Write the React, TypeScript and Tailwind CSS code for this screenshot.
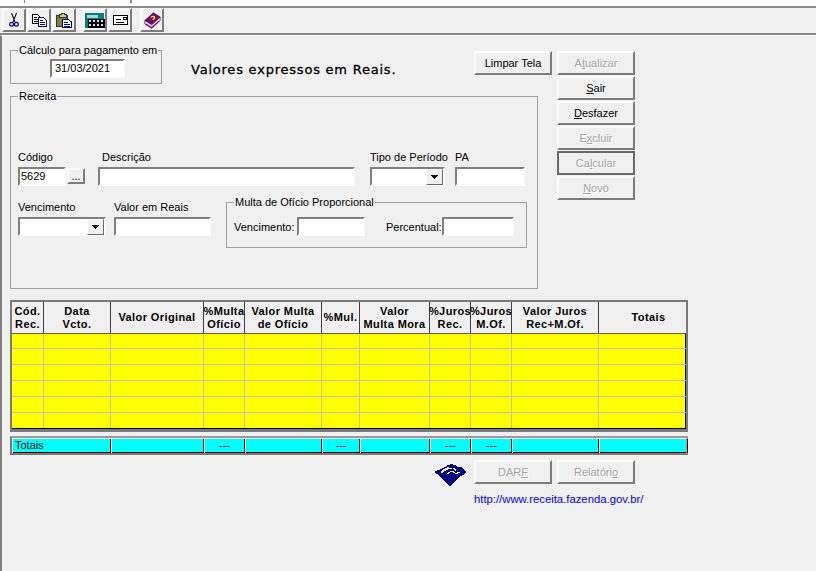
import React from "react";

const sunken = "border-2 border-t-[#808080] border-l-[#808080] border-b-[#fcfcfc] border-r-[#fcfcfc] bg-white";
const raised = "border-2 border-t-[#fbfbfb] border-l-[#fbfbfb] border-b-[#7c7c7c] border-r-[#7c7c7c] bg-[#f0f0f0]";
const defaultRaised = "border-2 border-[#696969] bg-[#f0f0f0]";
const gridCols = "grid grid-cols-[32px_67px_93px_41px_77px_38px_70px_41px_41px_87px_87px]";
const totalCols = "grid grid-cols-[99px_93px_41px_77px_38px_70px_41px_41px_87px_89px]";

const headers = [
  ["Cód.", "Rec."],
  ["Data", "Vcto."],
  ["Valor Original"],
  ["%Multa", "Ofício"],
  ["Valor Multa", "de Ofício"],
  ["%Mul."],
  ["Valor", "Multa Mora"],
  ["%Juros", "Rec."],
  ["%Juros", "M.Of."],
  ["Valor Juros", "Rec+M.Of."],
  ["Totais"],
];

const totals = ["Totais", "", "---", "", "---", "", "---", "---", "", ""];

function Btn({ children, disabled, strong, className = "" }: { children: React.ReactNode; disabled?: boolean; strong?: boolean; className?: string }) {
  return (
    <div
      className={`w-[78px] h-[24px] flex items-center justify-center text-[11px] ${strong ? defaultRaised : raised} ${
        disabled ? "text-[#a3a3a3] [text-shadow:1px_1px_0_#ffffff]" : "text-black"
      } ${className}`}
    >
      <span>{children}</span>
    </div>
  );
}

function Combo({ width }: { width: string }) {
  return (
    <div className={`h-[19px] flex justify-end items-start ${sunken} ${width}`}>
      <div className="w-[17px] h-[16px] flex items-center justify-center bg-[#f0f0f0] border border-t-[#fbfbfb] border-l-[#fbfbfb] border-b-[#6a6a6a] border-r-[#6a6a6a]">
        <svg width="7" height="4" viewBox="0 0 7 4" shapeRendering="crispEdges">
          <path d="M0 0H7V1H6V2H5V3H4V4H3V3H2V2H1V1H0Z" fill="#000" />
        </svg>
      </div>
    </div>
  );
}

function ToolBtn({ children }: { children: React.ReactNode }) {
  return <div className={`w-[24px] h-[24px] flex items-center justify-center ${raised}`}>{children}</div>;
}

function Scissors() {
  return (
    <svg width="10" height="14" viewBox="0 0 10 14" fill="none">
      <path d="M2.5 0L6 9M7.5 0L4 9" stroke="#111" strokeWidth="1.1" />
      <circle cx="2.6" cy="11.2" r="1.9" stroke="#000080" strokeWidth="1.2" />
      <circle cx="7.4" cy="11.2" r="1.9" stroke="#000080" strokeWidth="1.2" />
    </svg>
  );
}

function CopyIcon() {
  return (
    <svg width="15" height="13" viewBox="0 0 15 13" shapeRendering="crispEdges">
      <path d="M0.5 0.5H5.5L8.5 3.5V9.5H0.5Z" fill="#fff" stroke="#000" />
      <path d="M2 3H5M2 5H7M2 7H7" stroke="#000" />
      <path d="M6.5 3.5H11.5L14.5 6.5V12.5H6.5Z" fill="#fff" stroke="#000080" />
      <path d="M8 6H11M8 8H13M8 10H13" stroke="#000080" />
    </svg>
  );
}

function PasteIcon() {
  return (
    <svg width="16" height="15" viewBox="0 0 16 15" shapeRendering="crispEdges">
      <path d="M0.5 2.5H11.5V13.5H0.5Z" fill="#808040" stroke="#333" />
      <path d="M3 1.5H5V0.5H8V1.5H10V4H3Z" fill="#e8d050" stroke="#333" />
      <path d="M6.5 6.5H12L15.5 9V14.5H6.5Z" fill="#fff" stroke="#000080" />
      <path d="M8 9H12M8 11H14M8 13H14" stroke="#000080" />
    </svg>
  );
}

function CalcIcon() {
  return (
    <svg width="20" height="15" viewBox="0 0 20 15" shapeRendering="crispEdges">
      <path d="M0 0H19V15H0Z" fill="#008080" />
      <path d="M2 2H13V5H2Z" fill="#9adada" />
      <path d="M3 6H20V15H3Z" fill="#000" />
      <path d="M4 7H6V9H4ZM8 7H10V9H8ZM12 7H14V9H12ZM16 7H18V9H16ZM4 11H6V13H4ZM8 11H10V13H8ZM12 11H14V13H12ZM16 11H18V13H16Z" fill="#bfe8e8" />
    </svg>
  );
}

function CardIcon() {
  return (
    <svg width="15" height="10" viewBox="0 0 15 10" shapeRendering="crispEdges">
      <path d="M0.5 0.5H14.5V9.5H0.5Z" fill="#fff" stroke="#000" />
      <path d="M3 4H8M3 7H11M10 2H13V4H10Z" stroke="#000" fill="none" />
    </svg>
  );
}

function BookIcon() {
  return (
    <svg width="17" height="17" viewBox="0 0 20 20">
      <path d="M1 10L11 1L19 6L9 15Z" fill="#800080" stroke="#300030" strokeWidth="0.8" />
      <path d="M1 10V14L9 19L19 10V6L9 15Z" fill="#e8e8e8" stroke="#300030" strokeWidth="0.8" />
      <path d="M2 14L9 18.5L18 10.5" fill="none" stroke="#800080" strokeWidth="1.4" />
      <path d="M8.5 6.5C9.5 4.5 13 5 12.5 7C12 8 10.5 8 10.5 9.5" fill="none" stroke="#ffff00" strokeWidth="1.6" />
    </svg>
  );
}

function ReceitaLogo() {
  return (
    <svg width="33" height="23" viewBox="0 0 33 23" className="mt-[4px]" shapeRendering="crispEdges">
      <path d="M0 8L7 5L11 3L14 1L17 0L21 1L23 3L27 3L33 8L29 11L25 13L17 22H15L5 11L2 10Z" fill="#000080" />
      <path d="M7 9H9V8H10V7H12V6H14V5H18V4H15V3H13V4H11V5H9V6H8V7H7Z" fill="#f0f0f0" />
      <path d="M13 10H15V9H16V8H19V9H21V10H24V9H26V8H23V9H21V8H20V7H16V8H14V9H13Z" fill="#f0f0f0" />
      <path d="M19 4H21V5H22V7H21V6H20V5H19Z" fill="#f0f0f0" />
    </svg>
  );
}

export default function App() {
  return (
    <div className="w-[816px] h-[571px] overflow-hidden bg-[#f0f0f0] text-black text-[11px] leading-[14px] font-['Liberation_Sans',Arial,sans-serif]">
      {/* faixa do topo */}
      <div className="h-[6px] bg-white flex items-start">
        <div className="w-[1px] h-[3px] bg-[#d06060] ml-[24px]" />
        <div className="w-[2px] h-[3px] bg-[#8090a0] ml-[105px]" />
      </div>
      <div className="h-[2px] bg-[#8a8a8a]" />

      {/* barra de ferramentas */}
      <div className="h-[24px] flex items-start pl-[2px]">
        <ToolBtn><Scissors /></ToolBtn>
        <div className="w-px" />
        <ToolBtn><CopyIcon /></ToolBtn>
        <div className="w-px" />
        <ToolBtn><PasteIcon /></ToolBtn>
        <div className="w-[7px]" />
        <ToolBtn><CalcIcon /></ToolBtn>
        <div className="w-px" />
        <ToolBtn><CardIcon /></ToolBtn>
        <div className="w-[8px]" />
        <ToolBtn><BookIcon /></ToolBtn>
      </div>
      <div className="h-[2px] bg-[#8a8a8a] mt-[1px]" />

      <div className="border-l-2 border-l-[#808080] h-[536px] pl-[8px] pt-[8px] border-t border-t-white">
        <div className="flex items-start">
          <div className="w-[542px]">
            <div className="flex items-start h-[46px]">
              <fieldset className="w-[152px] h-[40px] border border-[#a0a0a0] pl-[7px]">
                <legend className="px-[1px] leading-[13px] whitespace-nowrap">Cálculo para pagamento em</legend>
                <div className={`w-[75px] h-[19px] ml-[32px] mt-[2px] pl-[3px] leading-[15px] ${sunken}`}>31/03/2021</div>
              </fieldset>
              <div className="ml-[29px] mt-[18px] text-[13px] leading-[16px] font-['DejaVu_Sans',sans-serif] tracking-[0.78px] [-webkit-text-stroke:0.3px_#000]">Valores expressos em Reais.</div>
              <Btn className="ml-auto mt-[7px]">Limpar Tela</Btn>
            </div>

            <fieldset className="w-[528px] h-[199px] border border-[#a0a0a0] pl-[7px]">
              <legend className="px-[1px] leading-[13px]">Receita</legend>
              <div className="flex items-start pt-[47px]">
                <div className="w-[80px]">
                  <div className="h-[14px]">Código</div>
                  <div className="flex items-start mt-[3px]">
                    <div className={`w-[48px] h-[19px] pl-[1px] leading-[15px] ${sunken}`}>5629</div>
                    <div className={`w-[18px] h-[16px] ml-px mt-px flex items-center justify-center leading-[10px] ${raised}`}>...</div>
                  </div>
                </div>
                <div className="w-[257px]">
                  <div className="h-[14px] pl-[4px]">Descrição</div>
                  <div className={`h-[19px] mt-[3px] ${sunken}`} />
                </div>
                <div className="ml-[15px] w-[75px]">
                  <div className="h-[14px] whitespace-nowrap">Tipo de Período</div>
                  <Combo width="w-[75px] mt-[3px]" />
                </div>
                <div className="ml-[10px] w-[70px]">
                  <div className="h-[14px]">PA</div>
                  <div className={`h-[19px] mt-[3px] ${sunken}`} />
                </div>
              </div>

              <div className="flex items-start mt-[10px]">
                <div className="w-[88px] pt-[4px]">
                  <div className="h-[14px]">Vencimento</div>
                  <Combo width="w-[88px] mt-[3px]" />
                </div>
                <div className="ml-[8px] w-[97px] pt-[4px]">
                  <div className="h-[14px]">Valor em Reais</div>
                  <div className={`h-[19px] mt-[3px] ${sunken}`} />
                </div>
                <fieldset className="ml-[15px] w-[301px] h-[52px] border border-[#a0a0a0] pl-[7px]">
                  <legend className="px-[1px] leading-[13px]">Multa de Ofício Proporcional</legend>
                  <div className="flex items-center mt-[8px]">
                    <span className="w-[63px] whitespace-nowrap">Vencimento:</span>
                    <div className={`w-[68px] h-[19px] ${sunken}`} />
                    <span className="ml-[21px] w-[56px] whitespace-nowrap">Percentual:</span>
                    <div className={`w-[72px] h-[19px] ${sunken}`} />
                  </div>
                </fieldset>
              </div>
            </fieldset>
          </div>

          <div className="ml-[5px] mt-[7px] flex flex-col gap-px">
            <Btn disabled>A<u>t</u>ualizar</Btn>
            <Btn><u>S</u>air</Btn>
            <Btn><u>D</u>esfazer</Btn>
            <Btn disabled>E<u>x</u>cluir</Btn>
            <Btn disabled strong>Ca<u>l</u>cular</Btn>
            <Btn disabled><u>N</u>ovo</Btn>
          </div>
        </div>

        {/* grade de valores */}
        <div className="mt-[11px] w-[678px] h-[132px] border-2 border-[#7a7a7a] border-b-[3px] bg-[#f0f0f0]">
          <div className={`${gridCols} h-[32px] border-b border-b-[#606060]`}>
            {headers.map((lines, i) => (
              <div
                key={i}
                className={`flex flex-col items-center justify-center font-bold text-[11px] leading-[13px] tracking-[0.4px] whitespace-nowrap ${
                  i === 10 ? "pl-[12px]" : "border-r border-r-[#404040]"
                }`}
              >
                {lines.map((l) => (
                  <span key={l}>{l}</span>
                ))}
              </div>
            ))}
          </div>
          {[0, 1, 2, 3, 4, 5].map((r) => (
            <div key={r} className={`${gridCols} ${r === 0 ? "h-[15px]" : "h-[16px]"} bg-[#ffff00] ${r === 5 ? "border-b border-b-black" : "border-b border-b-[#c0c0c0]"}`}>
              {headers.map((_, i) => (
                <div key={i} className={`border-r ${i === 10 ? "border-r-black" : "border-r-[#c0c0c0]"}`} />
              ))}
            </div>
          ))}
        </div>

        {/* totais */}
        <div className="mt-[4px] w-[678px] h-[19px] border-2 border-[#7a7a7a] border-t-[#9a9a9a] border-r-[#9a9a9a]">
          <div className={`${totalCols} h-[15px] bg-[#00ffff] border-t border-t-white border-b border-b-black`}>
            {totals.map((t, i) => (
              <div key={i} className={`h-[14px] border-r border-r-black border-l border-l-white leading-[12px] ${i === 0 ? "pl-[2px]" : "text-center"}`}>
                {t}
              </div>
            ))}
          </div>
        </div>

        {/* rodapé */}
        <div className="flex items-start mt-[5px] ml-[424px]">
          <ReceitaLogo />
          <Btn disabled className="ml-[7px]">DAR<u>F</u></Btn>
          <Btn disabled className="ml-[5px]">Relatóri<u>o</u></Btn>
        </div>
        <div className="ml-[464px] mt-[5px] text-[11.3px] leading-[14px] text-[#0000ff]">http://www.receita.fazenda.gov.br/</div>
      </div>
    </div>
  );
}
